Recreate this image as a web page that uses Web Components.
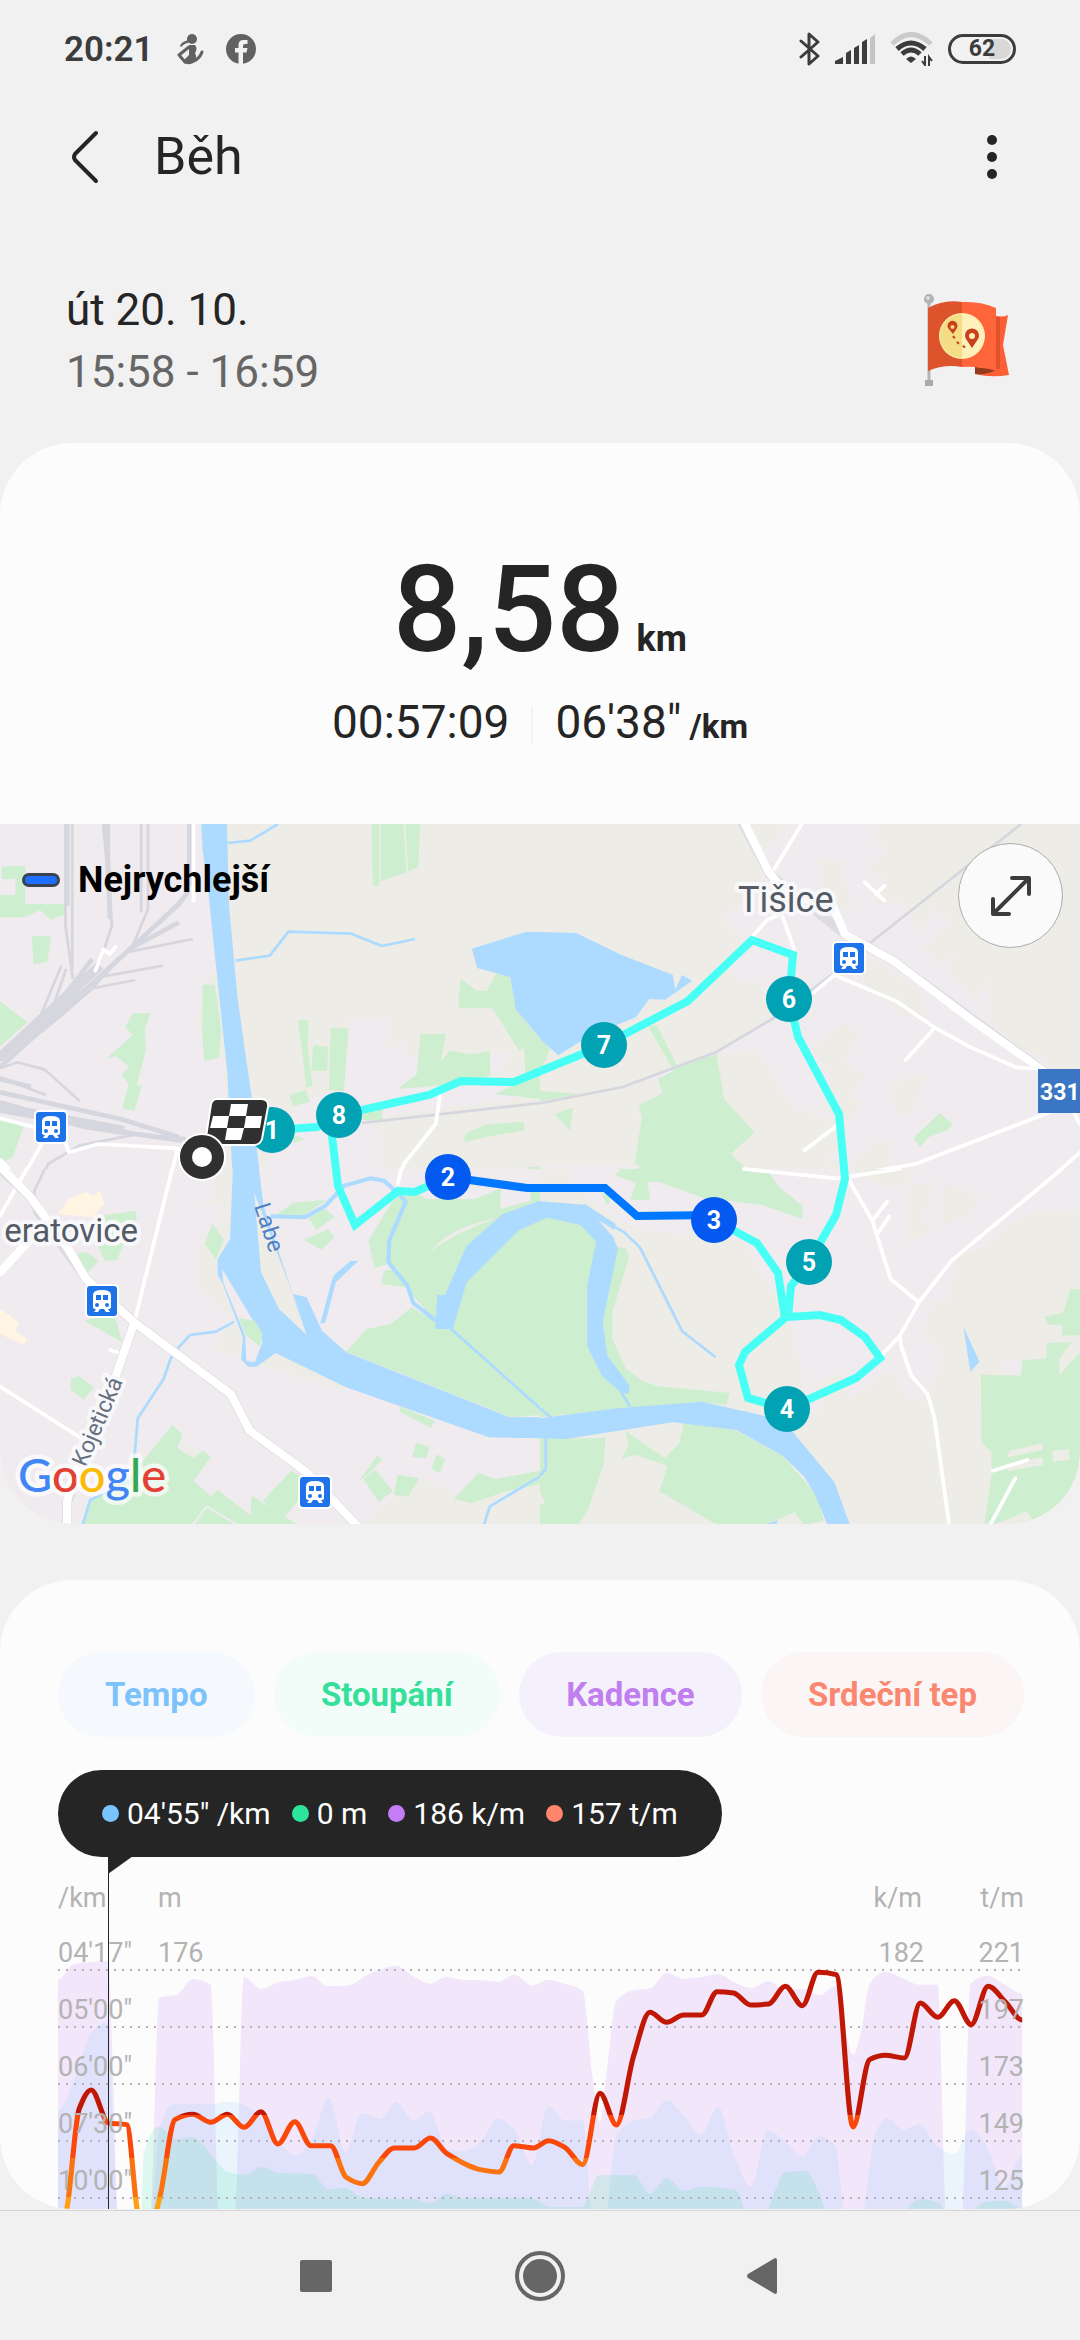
<!DOCTYPE html>
<html lang="cs">
<head>
<meta charset="utf-8">
<meta name="viewport" content="width=device-width, initial-scale=1">
<title>Běh</title>
<style>
  body {
    margin: 0;
    background: #f1f1f1;
    color: #252525;
    font-family: Roboto, "Liberation Sans", sans-serif;
  }
</style>
</head>
<body>
<run-page>
  <status-bar slot="top" time="20:21" battery="62"></status-bar>
  <app-header slot="top">Běh</app-header>
  <run-summary>
    <span slot="date">út 20. 10.</span>
    <span slot="time">15:58 - 16:59</span>
  </run-summary>
  <run-card>
    <run-stats distance="8,58" duration="00:57:09" pace="06'38&quot;"></run-stats>
    <route-map></route-map>
  </run-card>
  <run-card>
    <metric-chart>
      <metric-chip slot="chips" style="--tone:#7cc3fb;--tint:#f5f9fd">Tempo</metric-chip>
      <metric-chip slot="chips" style="--tone:#36e09a;--tint:#f2fcf9">Stoupání</metric-chip>
      <metric-chip slot="chips" style="--tone:#c07eee;--tint:#f5f1fc">Kadence</metric-chip>
      <metric-chip slot="chips" style="--tone:#fa8871;--tint:#fcf5f5">Srdeční tep</metric-chip>
      <metric-value slot="values" style="--tone:#77c4ff">04'55" /km</metric-value>
      <metric-value slot="values" style="--tone:#2fe59c">0 m</metric-value>
      <metric-value slot="values" style="--tone:#c47df4">186 k/m</metric-value>
      <metric-value slot="values" style="--tone:#ff866d">157 t/m</metric-value>
    </metric-chart>
  </run-card>
  <nav-bar slot="bottom"></nav-bar>
</run-page>

<script>
// Small base class: every element only supplies its markup
class BaseElement extends HTMLElement {
    connectedCallback() {
        if (this.shadowRoot) return;
        this.attachShadow({ mode: 'open' });
        this.shadowRoot.innerHTML = this.render();
    }
}

customElements.define('run-page', class extends BaseElement {
    render() {
        return `
      <style>
        :host { display: flex; flex-direction: column; min-height: 100vh; }
        main { flex: 1; display: flex; flex-direction: column; gap: 56px; }
        ::slotted(run-summary) { margin-bottom: -56px; }
      </style>
      <slot name="top"></slot>
      <main><slot></slot></main>
      <slot name="bottom"></slot>
    `;
    }
});

customElements.define('status-bar', class extends BaseElement {
    render() {
        return `
      <style>
        :host {
          display: flex; align-items: center; gap: 22px;
          height: 98px; padding: 0 64px; color: #3c3c3c;
        }
        time { font-size: 35px; font-weight: 600; }
        .space { flex: 1; }
        .right { display: flex; align-items: center; gap: 14px; }
        .battery {
          box-sizing: border-box; width: 68px; height: 30px; padding: 2px;
          border: 3px solid #3c3c3c; border-radius: 15px;
        }
        .level {
          height: 20px; border-radius: 10px; text-align: center;
          font-size: 23px; line-height: 20px; font-weight: 700;
          background: linear-gradient(90deg, transparent 62%, #d8d8d8 62%);
        }
      </style>
      <time>${this.getAttribute('time')}</time>
      <svg width="28" height="32" viewBox="0 0 28 32">
        <circle cx="16" cy="6" r="5" fill="#616161"/>
        <path d="M4 13Q5 9 12 7L12 10Q9 10 5 14Z" fill="#616161"/>
        <path d="M13 12H19Q22 15 19 20Q21 23 19 28Q16 32 11 31Q6 30 8 27L13 22Z" fill="#616161"/>
        <path d="M13 14L3 22L9 29M18 28Q24 25 26 19" fill="none" stroke="#616161" stroke-width="3" stroke-linecap="round" stroke-linejoin="round"/>
      </svg>
      <svg width="31" height="31" viewBox="0 0 31 31">
        <circle cx="15" cy="15" r="15" fill="#616161"/>
        <path d="M12.500 31V18.500H9V14H12.500V11Q12.500 6 17.500 6H21.500V10H19Q17 10 17 12V14H21.500L20.500 18.500H17V31Z" fill="#f1f1f1"/>
      </svg>
      <span class="space"></span>
      <div class="right">
        <svg width="22" height="36" viewBox="0 0 22 36" fill="none" stroke="#3c3c3c" stroke-width="3" stroke-linejoin="round" stroke-linecap="round">
          <path d="M2 10L19 25L10 33V3L19 11L2 26"/>
        </svg>
        <svg width="41" height="30" viewBox="0 0 41 30" fill="#3c3c3c">
          <path d="M0 30V27L8 23V30ZM11 30V19L16 16V30ZM19 30V14L24 11V30ZM27 30V8L32 5V30Z"/>
          <path d="M35 30V4L40 0V30Z" fill="#c4c4c4"/>
        </svg>
        <svg width="44" height="34" viewBox="0 0 44 34" fill="none" stroke-width="5">
          <path d="M2 12Q21 -7 41 12" stroke="#cbcbcb"/>
          <path d="M7 17Q21 5 35 17M12 22Q21 14 30 22" stroke="#3c3c3c"/>
          <path d="M21 31L16 27Q21 22 26 27Z" fill="#3c3c3c"/>
          <path d="M35 24V33L32 29M39 34V25L42 29" stroke="#3c3c3c" stroke-width="2"/>
        </svg>
        <div class="battery"><div class="level">${this.getAttribute('battery')}</div></div>
      </div>
    `;
    }
});

customElements.define('app-header', class extends BaseElement {
    render() {
        return `
      <style>
        :host { display: flex; align-items: center; height: 118px; padding: 0 66px 0 54px; }
        button { border: 0; padding: 0; background: none; color: inherit; display: flex; }
        h1 { flex: 1; margin: 0; font-size: 52px; line-height: 60px; font-weight: 400; }
        .back { padding: 0 15px; margin-right: 38px; }
      </style>
      <button class="back" aria-label="Zpět">
        <svg width="32" height="54" viewBox="0 0 32 54" fill="none" stroke="#252525" stroke-width="4" stroke-linecap="round" stroke-linejoin="round">
          <path d="M27 3L6 24Q4 27 6 30L27 51"/>
        </svg>
      </button>
      <h1><slot></slot></h1>
      <button aria-label="Další možnosti">
        <svg width="44" height="46" viewBox="0 0 44 46" fill="#252525">
          <circle cx="22" cy="6" r="5"/><circle cx="22" cy="23" r="5"/><circle cx="22" cy="40" r="5"/>
        </svg>
      </button>
    `;
    }
});

customElements.define('run-summary', class extends BaseElement {
    render() {
        return `
      <style>
        :host {
          display: flex; justify-content: space-between; align-items: center;
          padding: 63px 66px 40px; font-size: 44px; line-height: 62px;
        }
        .time { color: #666; }
      </style>
      <div>
        <div><slot name="date"></slot></div>
        <div class="time"><slot name="time"></slot></div>
      </div>
      <svg width="90" height="94" viewBox="0 0 90 94">
        <path d="M5 7V86" stroke="#b4b4b4" stroke-width="3"/>
        <rect x="1" y="86" width="8" height="6" fill="#aaa"/>
        <circle cx="5" cy="5" r="5" fill="#b2b2b2"/><circle cx="4" cy="4" r="2" fill="#ddd"/>
        <path d="M51 73V80Q67 84 85 81L79 51L84 21Q78 24 70 21V74Z" fill="#fc5f35"/>
        <path d="M51 73Q62 74 72 77V23L76 23V75Z" fill="#e0512a"/>
        <path d="M51 73V80Q64 81 72 76Z" fill="#963c1e"/>
        <path d="M4 14Q20 5 38 8V73Q20 70 4 77Z" fill="#dc532c"/>
        <path d="M38 8Q57 7 72 14V77Q57 72 38 73Z" fill="#ff643a"/>
        <circle cx="38" cy="42" r="23" fill="#fdf0b8"/>
        <path d="M38 20A22 22 0 0 0 38 64Z" fill="#f4dd85"/>
        <path d="M29 40L24 34A5 5 0 1 1 33 34ZM48 54L42 45A7 7 0 1 1 54 45Z" fill="#c9401c"/>
        <circle cx="28.500" cy="33" r="2" fill="#f4dd85"/><circle cx="48" cy="42" r="3" fill="#fdf0b8"/>
        <path d="M29 42L34 49L44 55" fill="none" stroke="#c9401c" stroke-width="2" stroke-dasharray="3 4"/>
      </svg>
    `;
    }
});

customElements.define('run-card', class extends BaseElement {
    render() {
        return `
      <style>
        :host { display: block; background: #fcfcfc; border-radius: 72px; overflow: hidden; }
      </style>
      <slot></slot>
    `;
    }
});

customElements.define('run-stats', class extends BaseElement {
    render() {
        return `
      <style>
        :host { display: flex; flex-direction: column; align-items: center; padding: 92px 0 60px; }
        .row { display: flex; align-items: baseline; }
        .distance { font-size: 120px; line-height: 150px; font-weight: 500; margin-right: 12px; }
        .unit { font-size: 36px; font-weight: 700; }
        .detail { font-size: 46px; line-height: 75px; }
        .detail .unit { font-size: 33px; margin-left: 8px; }
        .line { align-self: center; width: 2px; height: 36px; margin: 0 22px; background: #f3f3f3; }
      </style>
      <div class="row">
        <span class="distance">${this.getAttribute('distance')}</span>
        <span class="unit">km</span>
      </div>
      <div class="row detail">
        <span>${this.getAttribute('duration')}</span>
        <span class="line"></span>
        <span>${this.getAttribute('pace')}</span>
        <span class="unit">/km</span>
      </div>
    `;
    }
});

// Kilometre marks on the route: label, x, y, fastest section or not
const MARKS = [
    ['1', 272, 306], ['8', 339, 291], ['7', 604, 221], ['6', 789, 175],
    ['5', 809, 438], ['4', 787, 585], ['3', 714, 396, true], ['2', 448, 353, true]
];
const STATIONS = [[51, 303], [102, 477], [315, 668], [849, 134]];

customElements.define('route-map', class extends BaseElement {
    render() {
        const marks = MARKS.map(([n, x, y, fast]) => `
        <circle cx="${x}" cy="${y}" r="23" fill="${fast ? '#0459f0' : '#00a2b3'}"/>
        <text x="${x}" y="${y + 9}" class="mark">${n}</text>`).join('');
        const stations = STATIONS.map(([x, y]) => `
        <g transform="translate(${x} ${y})">
          <rect x="-17" y="-17" width="34" height="34" rx="5" fill="#fff"/>
          <rect x="-15" y="-15" width="30" height="30" rx="3" fill="#1f73e8"/>
          <path d="M-9 6V-6Q-9 -11 0 -11Q9 -11 9 -6V6Q9 8 6 8L8 11H4L2 8H-2L-4 11H-8L-6 8Q-9 8 -9 6Z" fill="#fff"/>
          <path d="M-6 -6H-1V-1H-6ZM1 -6H6V-1H1Z" fill="#1f73e8"/>
          <circle cx="-5" cy="4" r="2" fill="#1f73e8"/><circle cx="5" cy="4" r="2" fill="#1f73e8"/>
        </g>`).join('');
        return `
      <style>
        :host { display: block; position: relative; border-radius: 0 0 72px 72px; overflow: hidden; }
        .map { display: block; width: 100%; height: auto; font-family: Roboto, sans-serif; }
        .u { fill: #efebef; }
        .b { fill: #eeece6; }
        .g { fill: #ceeed0; }
        .w { fill: #addaff; }
        .y { fill: #fff5e2; }
        .stream, .rail, .road { fill: none; stroke-linejoin: round; }
        .stream { stroke: #addaff; stroke-width: 8; }
        .rail { stroke: #d6d6de; stroke-width: 8; }
        .yard { stroke-width: 14; }
        .road { stroke: #fff; stroke-width: 11; stroke-linecap: round; }
        .main { stroke-width: 24; }
        .edge { stroke: #dcdce2; stroke-width: 28; }
        .mark { fill: #fff; font-size: 25px; font-weight: 700; text-anchor: middle; }
        .place { fill: #545b66; font-size: 36px; stroke: #f8f8fa; stroke-width: 8px; paint-order: stroke; stroke-linejoin: round; }
        .town { font-size: 33px; }
        .street { font-size: 23px; fill: #667080; }
        .legend {
          position: absolute; left: 22px; top: 34px;
          display: flex; align-items: center; gap: 18px;
          color: #000; font-size: 36px; line-height: 44px; font-weight: 700;
        }
        .legend i { box-sizing: border-box; width: 38px; height: 14px; border: 3px solid #3c4250; border-radius: 7px; background: #1f6fff; }
        button {
          position: absolute; right: 17px; top: 19px; width: 105px; height: 105px; padding: 0;
          display: flex; align-items: center; justify-content: center;
          border: 1px solid #aaa; border-radius: 50%; background: #fafafa;
        }
      </style>
      <svg class="map" viewBox="0 0 1080 700">
        <rect width="1080" height="700" class="b"/>
        <!-- north west -->
        <g transform="matrix(.3444 0 0 .3333 0 -5)">
          <path class="u" d="M0 15H590L625 450L600 480L565 620L600 650L650 730L665 1090H0ZM1012 598H1130V690L1180 665L1185 710H1215L1210 765L1155 808L1568 790V830L1275 870L1060 900L1110 945V1090H775V1000L870 850L955 815H1000ZM1425 695H1480L1460 760H1425Z"/>
          <path class="g" d="M5 142H73V255H187V287L147 302L116 273L73 295H0V228H45V180H5ZM93 352H148L138 428L97 436ZM0 547L80 610L0 682ZM385 583H437L421 627L423 695L397 798L411 800L390 876L355 868L374 796L353 769L375 744L338 711L308 720L386 647L363 624ZM588 497H624L642 630L636 717L594 725L587 650ZM1078 15H1220L1215 143L1186 158L1102 188V200H1083ZM865 604H896L893 680L908 800L888 806L880 720ZM910 678L953 684L950 755H904ZM960 628H1012L998 816L955 814ZM841 828L887 812L900 850L850 860ZM1221 645H1295L1280 727L1305 695L1368 706L1422 696L1424 770L1270 800L1155 810L1210 766ZM1338 478L1383 515H1415L1440 463L1482 475L1497 570L1568 660V840L1435 825L1490 800L1525 770L1522 683L1508 697L1430 568L1330 567ZM1040 865L1110 855V905L1050 902ZM1350 945L1408 917L1520 908L1524 934L1420 952L1348 970ZM855 950L887 960L850 973ZM0 893L68 925L38 1012L0 1038ZM1528 1045L1568 1042V1090H1528Z"/>
          <path stroke="#eeece6" stroke-width="5" d="M1103 15V190M1174 15L1183 160"/>
          <path class="w" d="M584 15H659L665 260L690 540L730 830L756 1090H676L660 760L625 420L605 220L588 90ZM1370 389L1525 339H1568V658L1497 570L1482 475L1440 462L1385 447Z"/>
          <path class="stream" d="M660 72L727 65L807 15M684 425L783 410L838 338L1020 344L1109 381L1205 360"/>
          <path class="rail" d="M190 15V320L212 480M210 15V450M300 15L325 320L290 430M316 15V230M410 15V280M430 15V270L385 380M548 15V220L380 390L0 725M560 360L365 400L270 505M473 440L275 477M393 483L270 508L120 640M178 440L120 585M192 450L150 575M0 748L50 730L130 752L232 847M0 775L133 828M150 880L380 940L540 962M120 1080L140 1035L230 980L400 945L540 958M1050 912L1568 852"/>
          <path class="rail yard" d="M195 15V260M308 15L320 300M550 15V200M545 220L520 255L240 520L0 745M520 310L385 385M268 420L180 540M0 780L90 803M0 820L350 900L520 955M0 850L250 925L530 965M0 875L300 930"/>
          <path class="rail" style="stroke-width:28" d="M0 715L125 595L290 440M0 865L360 935"/>
          <path class="road" d="M562 15V245M277 455L301 391L318 405L336 383M0 898L100 925M120 978L60 1085M190 970L200 1000L285 975L515 988L495 1080M1278 830L1265 915L1173 1035L1162 1085"/>
          <path class="road main" d="M0 1030L50 1090"/>
        </g>
        <!-- north east -->
        <g transform="matrix(.3444 0 0 .3333 540 -5)">
          <path class="u" d="M720 15H990L970 70L1018 92L955 145L1000 180L970 255L1050 250L1100 350L1140 265L1190 305L1110 395L1165 430L1205 405L1190 470L1265 540L1305 480V615L1400 690L1470 720L1568 850V1090H1000L1030 960L965 970L900 1040L810 1020L860 950L690 960L750 880L710 830L630 690L510 710L535 840L625 940L555 1005L600 1050L670 1090H0V1040L290 1040L285 860L0 850L240 800L510 700L700 590L630 490L580 485L540 440L620 390L530 300L640 200V100Z"/>
          <path class="b" d="M0 850L240 800L345 780L355 823L287 858L290 1040H0Z"/>
          <path class="b" d="M800 110L820 180L780 250L900 270L880 130ZM880 430L950 410L1100 510L1130 600L1050 590ZM790 690L880 610L925 660L880 720L945 770L900 830L940 850L895 900L810 870L850 780ZM1010 800L1120 760L1080 880L1040 890ZM690 940L760 870L860 910L880 990L800 1040L740 1010Z"/>
          <path class="g" d="M0 658L30 690L0 760ZM313 620L340 620L400 745L512 705L535 840L623 940L555 1005L600 1050L670 1090H285L217 1065L232 1045L270 1070L290 1040L275 1035L295 900L287 858L357 823L342 780L388 755ZM0 815L118 825L0 847ZM42 886L97 865L86 934ZM1160 882L1198 915L1185 932L1127 955L1104 984L1084 958Z"/>
          <path class="w" d="M0 339L105 342L235 407L385 467L393 512L412 468L442 485L363 542L318 540L278 595L145 650L53 709L0 660Z"/>
          <path class="rail" d="M0 853L240 804L510 700L690 590L850 465M955 375L1230 150L1397 15"/>
          <path class="road edge" d="M590 15L670 170L885 345L1025 425L1460 755"/>
          <path class="road" d="M760 15L680 150M943 190L1000 245M1000 200L975 225M610 360L660 302L690 290M705 295L738 390M795 520L855 468L1035 547L1145 625L1245 682L1383 745L1450 750M1145 628L1062 723M768 994L868 915M592 1050L860 1075L1090 1035L1480 880M1568 1000L1470 1090M1550 880L1568 915"/>
          <path class="road main" d="M595 15L665 160L720 230L850 260L885 345L1025 425L1250 600L1460 755"/>
        </g>
        <!-- south west -->
        <g transform="matrix(.3444 0 0 .3333 0 345)">
          <path class="u" d="M0 0H1568V1068H0Z"/>
          <path class="b" d="M670 0H630L615 90L580 105L640 110V170L600 190L570 260L568 350L630 400L680 458L650 490L615 530L660 560L710 540L760 590L1005 665V550L850 375L760 110ZM1040 215L1090 200L1070 270L1045 275ZM515 800L590 860L550 880ZM1060 1068L1100 1020L1230 930L1330 980L1568 940V1068Z"/>
          <path class="u" d="M765 110L850 375L930 480L1005 550L1110 465V250L1000 60H770Z"/>
          <path class="y" d="M168 135L200 90L250 68L270 82L290 65L303 105L270 145ZM0 420L55 460L45 485L77 510L70 528L0 495Z"/>
          <path class="g" d="M290 140L395 125V180L355 235L340 272L305 275L285 235ZM225 255L250 248L287 275L250 315ZM617 165L650 212L627 270L594 225ZM245 455L330 430L355 520ZM206 628L230 622L273 655L242 692L206 662ZM795 143L850 102L950 92L880 140ZM897 147L940 118L972 143L918 184ZM883 213L952 180L972 205L934 242ZM1070 215L1140 95L1160 60H1568V738L1485 745L1005 548L1065 480L1135 465L1195 415L1260 455L1180 355L1108 345L1115 305L1160 300L1127 285L1088 297ZM240 1068L262 993L380 920L500 768L530 795L515 837L560 867L590 845L612 865L562 935L612 982L632 963L728 1040L730 980L865 1068ZM763 995L845 905L890 930L870 990L822 1050ZM1160 712L1262 755L1253 777L1160 728ZM1208 822L1248 833L1238 868L1197 863ZM1268 856L1293 870L1276 913L1253 898ZM1040 938L1095 860L1110 870L1080 905ZM1055 930L1090 902L1140 965L1100 1000ZM1155 917L1217 928L1185 983L1143 978ZM1318 990L1388 912L1440 930L1568 905V945L1460 970L1370 1003Z"/>
          <path class="u" d="M1160 60L1200 70L1240 90L1380 90L1450 60L1568 50V0H1200ZM1455 40H1540V95L1453 120Z"/>
          <path class="b" d="M1245 253Q1300 175 1450 145Q1320 190 1245 253Z"/>
          <path fill="none" stroke="#efebef" stroke-width="6" d="M560 1068L600 1013L690 1068"/>
          <path class="w" d="M676 0H752L765 110L850 375L890 385L935 485L1005 550L1480 745H1568V808L1420 805L1005 655L800 552L745 593H720L700 570L705 505L645 340L632 320V270L668 210ZM1263 480L1270 378H1292L1355 230L1460 135L1568 95V155L1505 185L1355 340L1315 480Z"/>
          <path class="b" d="M738 70L850 375L890 497L810 420L758 310Z"/>
          <path class="u" d="M645 300L758 495L762 520L740 580L715 575L712 500L648 340Z"/>
          <path class="g" d="M693 447L740 455L762 495L755 532L715 500Z"/>
          <path class="w" d="M930 465L962 340L970 318L1018 276H1040L975 340L945 460Z"/>
          <path class="stream" style="stroke-width:12" d="M785 142L885 145L945 110L1000 50L1075 28L1115 35L1155 72L1178 98L1130 215L1128 280L1183 350L1200 402L1265 455"/>
          <path class="stream" d="M1310 480L1568 718M680 458L627 488L552 498L515 540L495 570L475 630L400 748L390 870L385 930L262 993L240 1068M1568 922L1422 1013L1405 1068"/>
          <path class="rail" d="M130 0L100 65V130L190 260L240 325"/>
          <path class="road" d="M78 0L0 140M500 0L390 460M0 653L240 810M320 543L340 550M1165 0L1155 45"/>
          <path class="road edge" d="M0 0L85 80L250 330L390 460L670 675L725 785L890 910L1035 1068M390 460L320 670L195 1000V1068"/>
          <path class="road main" d="M0 -8L85 80L195 235L250 330L390 460L670 675L725 785L890 910L1035 1068M0 310L85 215M390 460L320 670L205 950L195 1000V1068"/>
        </g>
        <!-- south east -->
        <g transform="matrix(.3444 0 0 .3333 540 345)">
          <path class="b" d="M0 0H1568V1068H0Z"/>
          <path class="u" d="M90 0H900L990 50H1070L1090 0H1568V135L1460 120L1360 170L1290 235L1210 260L1190 390L1140 400L1110 500L1170 550L1155 610L1115 690H1060L1020 600L900 690L870 610L800 640L830 710L780 740L740 500L720 450L590 210L300 185L220 150L92 45ZM1335 570L1400 575L1390 620L1340 610Z"/>
          <path class="b" d="M1070 50L1150 40L1110 150L1140 180L1060 230ZM1170 40L1270 80L1260 130L1170 170Z"/>
          <path class="g" d="M0 140L130 145L190 230L250 238L257 268L210 430V510L250 600L300 638L345 652L552 672L540 708L470 700L230 720L0 745ZM235 0H660L690 50L762 110V150L645 108L580 100L470 85L340 37L312 40L320 93H263L278 42L217 18ZM175 70L205 85L197 110ZM0 808H165L190 803L185 885L140 1020L110 1068H0V1010L15 1000L0 970ZM248 785L362 867L405 823L417 760L570 785L705 860L800 975L825 1055L765 1068L740 1030L650 1068H515L347 967L370 890L275 857L235 870L257 830ZM1540 360H1568V498L1516 500V467L1475 468L1465 443L1520 430ZM1472 522L1543 520L1508 570V618L1568 550V1068H1290L1312 905L1310 850L1282 820L1280 617L1397 620L1400 575L1470 568Z"/>
          <path class="b" d="M1362 845L1460 823V842L1358 865ZM1357 885L1460 865V888L1357 907ZM1487 847L1535 840L1538 872L1490 878ZM1375 1045L1412 1025L1440 1068H1310Z"/>
          <path class="b" d="M225 240L245 232L175 430V530L230 640L345 652L300 638L250 600L210 510V430L257 268Z" opacity="0"/>
          <path class="w" d="M0 97L130 107L213 205L226 240L182 460L196 560L260 650L257 675L232 668L180 620L137 530V350L163 218L118 168L22 146L0 155ZM110 115L130 105L220 165L215 182ZM0 748L225 718L470 698L650 740L735 790L855 940L900 1068H835L795 970L765 920L705 860L570 783L385 760L75 810L0 808ZM1230 475L1276 578L1249 609ZM650 1068L690 1053L685 1068Z"/>
          <path class="stream" d="M210 170L245 190L290 235L413 487L510 565M235 670L262 713M0 718L33 747M17 808V900L0 920"/>
          <path class="road" d="M592 0L860 28L1045 0M895 30L965 155L1018 330L1100 400M965 155L1008 98M980 195L1013 143M1515 0L1195 275L1100 400L1045 500L990 560M1045 500L1048 530L1078 620L1125 675L1145 745L1188 1068M1315 905L1415 873M1380 928L1308 1066"/>
        </g>
        <text class="place" x="738" y="88">Tišice</text>
        <text class="place town" x="138" y="418" text-anchor="end">eratovice</text>
        <text class="place street" transform="translate(86 644) rotate(-67)">Kojetická</text>
        <text transform="translate(254 382) rotate(72)" font-size="23" fill="#4f7fc4">Labe</text>
        ${stations}
        <rect x="1038" y="245" width="42" height="44" fill="#3b76c5"/>
        <text x="1040" y="276" font-size="23" font-weight="700" fill="#fff">331</text>
        <g fill="none" stroke="#48fff6" stroke-width="8">
          <path d="M272 306L317 303L339 291L429 271L461 257L514 258L604 221L688 177L752 116L793 131L789 175L798 213L839 290L845 355L836 391L809 438L791 462L788 493L820 491L841 496L865 513L880 534L856 554L787 585L748 574L739 541L745 528L785 494L778 449L757 419L714 396"/>
          <path d="M339 291L332 312L338 362L355 401L398 367L415 368L448 353"/>
          <path d="M448 353L527 364L605 364L637 392L714 391" stroke="#0077ff"/>
        </g>
        ${marks}
        <path d="M216 275H262Q269 276 268 283L262 315Q260 321 254 321H212Q205 320 206 313L211 280Q212 276 216 275Z" fill="#303030" stroke="#fff" stroke-width="2"/>
        <path d="M231 280H248L246 292H229ZM213 292H229L227 304H210ZM246 292H262L260 304H244ZM227 304H244L241 316H225Z" fill="#fff"/>
        <circle cx="202" cy="333" r="23" fill="#303030" stroke="#fff" stroke-width="2"/>
        <circle cx="202" cy="333" r="10" fill="#fff"/>
        <text x="18" y="668" style="font: 500 47px Lato, sans-serif; stroke: #ffffffb0; stroke-width: 9px; paint-order: stroke; stroke-linejoin: round"><tspan fill="#4285f4">G</tspan><tspan fill="#e34133">o</tspan><tspan fill="#fabb05">o</tspan><tspan fill="#4285f4">g</tspan><tspan fill="#34a853">l</tspan><tspan fill="#e34133">e</tspan></text>
      </svg>
      <div class="legend"><i></i>Nejrychlejší</div>
      <button aria-label="Zvětšit mapu">
        <svg width="42" height="42" viewBox="0 0 42 42" fill="none" stroke="#3c3c3c" stroke-width="4" stroke-linecap="round" stroke-linejoin="round">
          <path d="M4 38L38 4M22 3H39V19M3 24V39H19"/>
        </svg>
      </button>
    `;
    }
});

customElements.define('metric-chip', class extends BaseElement {
    render() {
        return `
      <style>
        :host { display: block; }
        button {
          height: 85px; padding: 0 47px; border: 0; border-radius: 43px;
          background: var(--tint); color: var(--tone);
          font: 700 33px/40px Roboto, sans-serif; white-space: nowrap;
        }
      </style>
      <button><slot></slot></button>
    `;
    }
});

customElements.define('metric-value', class extends BaseElement {
    render() {
        return `
      <style>
        :host { display: flex; align-items: center; gap: 8px; }
        i { width: 17px; height: 17px; border-radius: 50%; background: var(--tone); }
      </style>
      <i></i><span><slot></slot></span>
    `;
    }
});

// Series as runs of [x, y]; a run ends where the value drops below the chart
const CADENCE = [
    [[168, 362], [215, 315], [315, 307], [328, 640], [343, 1070]],
    [[437, 1070], [462, 415], [512, 408], [560, 360], [612, 378], [636, 1070]],
    [[681, 1070], [708, 354], [760, 390], [810, 370], [857, 362], [905, 351], [950, 381], [1010, 380], [1060, 352],
        [1105, 331], [1152, 321], [1200, 352], [1248, 374], [1296, 354], [1345, 363], [1400, 364], [1449, 368],
        [1494, 347], [1545, 379], [1592, 363], [1640, 374], [1692, 395], [1720, 650], [1742, 790], [1760, 650],
        [1790, 425], [1840, 394], [1888, 388], [1936, 341], [1985, 360], [2035, 355], [2085, 345], [2135, 371],
        [2183, 387], [2230, 366], [2280, 395], [2330, 390], [2380, 408], [2428, 380], [2455, 520], [2477, 588],
        [2500, 520], [2525, 375], [2570, 338], [2620, 357], [2670, 377], [2723, 377], [2748, 1070]],
    [[2793, 1070], [2818, 375], [2868, 350], [2915, 376], [2968, 403]]
];
const PACE = [
    [[168, 755], [220, 650], [265, 520], [315, 488], [328, 800], [343, 1070]],
    [[437, 1070], [465, 800], [500, 736], [612, 736], [660, 728], [709, 738], [760, 780], [810, 850], [858, 890],
        [905, 840], [955, 717], [1004, 880], [1050, 762], [1103, 780], [1152, 728], [1200, 785], [1248, 757],
        [1296, 870], [1350, 876], [1395, 850], [1445, 777], [1492, 810], [1545, 918], [1592, 742], [1640, 785],
        [1692, 784], [1720, 1070]],
    [[1757, 1070], [1790, 830], [1840, 785], [1888, 778], [1936, 723], [1985, 770], [2035, 826], [2085, 744],
        [2132, 890], [2180, 983], [2230, 814], [2280, 848], [2328, 893], [2378, 832], [2425, 860], [2455, 1070]],
    [[2500, 1070], [2540, 830], [2575, 778], [2623, 812], [2670, 795], [2720, 860], [2770, 884], [2820, 810],
        [2868, 870], [2915, 985], [2968, 890]]
];
const CLIMB = [
    [[408, 1070], [418, 880], [460, 803], [512, 841], [560, 834], [612, 885], [660, 938], [709, 947], [760, 924],
        [810, 942], [905, 945], [955, 991], [1004, 987], [1052, 1016], [1203, 1020], [1250, 1032], [1298, 1004],
        [1350, 1018], [1545, 1018], [1600, 1045], [1692, 1043], [1740, 948], [1840, 948], [1888, 1005], [1936, 958],
        [1985, 995], [2035, 983], [2135, 992], [2175, 1070]],
    [[2215, 1070], [2280, 940], [2340, 935], [2378, 1000], [2405, 1070]],
    [[2605, 1070], [2670, 1021], [2723, 1030], [2760, 1070]],
    [[2790, 1070], [2868, 1028], [2920, 1025], [2968, 1048]]
];
const HEART = [
    [[187, 1070], [230, 750], [265, 693], [315, 792], [368, 797], [404, 1070]],
    [[450, 1060], [465, 1010], [508, 782], [560, 766], [612, 790], [660, 766], [709, 805], [758, 758], [807, 855],
        [856, 788], [903, 860], [960, 860], [1005, 955], [1052, 974], [1100, 910], [1145, 867], [1203, 867],
        [1250, 837], [1298, 884], [1395, 932], [1449, 939], [1492, 860], [1549, 867], [1593, 845], [1640, 865],
        [1692, 917], [1742, 703], [1790, 798], [1840, 590], [1887, 460], [1936, 490], [1985, 468], [2038, 468],
        [2082, 398], [2130, 402], [2180, 438], [2232, 435], [2280, 382], [2330, 440], [2375, 340], [2428, 347],
        [2477, 804], [2525, 602], [2570, 589], [2626, 597], [2672, 432], [2723, 475], [2771, 425], [2820, 497],
        [2869, 382], [2920, 430], [2968, 483]]
];

// Monotone cubic through the points, so peaks never overshoot
function curve(points) {
    const slope = points.map((p, i) => {
        const a = points[i - 1], b = points[i + 1];
        if (!a || !b) return 0;
        const s0 = (p[1] - a[1]) / (p[0] - a[0]);
        const s1 = (b[1] - p[1]) / (b[0] - p[0]);
        return s0 * s1 <= 0 ? 0 : 2 * s0 * s1 / (s0 + s1);
    });
    let d = `M${points[0]}`;
    for (let i = 1; i < points.length; i++) {
        const [x0, y0] = points[i - 1], [x1, y1] = points[i];
        const t = (x1 - x0) / 3;
        d += `C${x0 + t} ${y0 + slope[i - 1] * t} ${x1 - t} ${y1 - slope[i] * t} ${x1} ${y1}`;
    }
    return d;
}

const line = runs => runs.map(curve).join('');
const area = runs => runs.map(r => `${curve(r)}V1070H${r[0][0]}Z`).join('');

customElements.define('metric-chart', class extends BaseElement {
    render() {
        const pace = ["04'17\"", "05'00\"", "06'00\"", "07'30\"", "10'00\""];
        const heart = [221, 197, 173, 149, 125];
        const grid = pace.map((_, i) => `<path d="M0 ${111 + i * 57}H966"/>`).join('');
        const labels = pace.map((p, i) => `
          <text x="0" y="${103 + i * 57}">${p}</text>
          <text x="966" y="${103 + i * 57}" text-anchor="end">${heart[i]}</text>`).join('');
        return `
      <style>
        :host { display: block; padding: 72px 56px 0 58px; }
        .chips { display: flex; justify-content: space-between; margin-bottom: 33px; }
        .values {
          display: flex; align-items: center; gap: 21px; width: fit-content; height: 87px;
          padding: 0 44px; border-radius: 44px; background: #252525; color: #fff; font-size: 30px;
          white-space: nowrap; box-sizing: border-box;
        }
        svg { display: block; width: 100%; height: auto; font: 27px Roboto, sans-serif; }
      </style>
      <div class="chips"><slot name="chips"></slot></div>
      <div class="values"><slot name="values"></slot></div>
      <svg viewBox="0 -2 966 352">
        <defs>
          <linearGradient id="zones" gradientUnits="userSpaceOnUse" x1="0" y1="0" x2="0" y2="1200">
            <stop offset=".64" stop-color="#c11806"/><stop offset=".64" stop-color="#f9480a"/>
            <stop offset=".748" stop-color="#f9480a"/><stop offset=".748" stop-color="#fb7210"/>
            <stop offset=".846" stop-color="#fb7210"/><stop offset=".846" stop-color="#fca012"/>
          </linearGradient>
        </defs>
        <g transform="matrix(.3444 0 0 .3333 -58 0)">
          <path d="${area(CADENCE)}" fill="#c47df2" opacity=".17"/>
          <path d="${area(PACE)}" fill="#77c4ff" opacity=".14"/>
          <path d="${area(CLIMB)}" fill="#2de2a0" opacity=".15"/>
        </g>
        <g stroke="#b5b0b8" stroke-width="2" stroke-dasharray="2 6">${grid}</g>
        <path d="${line(HEART)}" transform="matrix(.3444 0 0 .3333 -58 0)" fill="none" stroke="url(#zones)" stroke-width="15" stroke-linejoin="round"/>
        <g fill="#b3b3b3">
          <text x="0" y="48">/km</text><text x="100" y="48">m</text>
          <text x="864" y="48" text-anchor="end">k/m</text><text x="966" y="48" text-anchor="end">t/m</text>
          <text x="100" y="103">176</text><text x="866" y="103" text-anchor="end">182</text>
          ${labels}
        </g>
        <rect x="50" y="-2" width="1" height="352" fill="#252525"/>
        <path d="M50 -3H75L50 15Z" fill="#252525"/>
      </svg>
    `;
    }
});

customElements.define('nav-bar', class extends BaseElement {
    render() {
        return `
      <style>
        :host {
          box-sizing: border-box; display: flex; justify-content: center; align-items: center; gap: 174px;
          height: 130px; border-top: 1px solid #d5d5d5; background: #f1f1f1;
        }
        button { width: 50px; height: 50px; padding: 0; border: 0; background: none; }
        svg { display: block; fill: #666; }
      </style>
      <button aria-label="Poslední aplikace"><svg width="50" height="50"><rect x="9" y="9" width="32" height="32" rx="2"/></svg></button>
      <button aria-label="Domů">
        <svg width="50" height="50"><circle cx="25" cy="25" r="17"/><circle cx="25" cy="25" r="23" fill="none" stroke="#666" stroke-width="4"/></svg>
      </button>
      <button aria-label="Zpět">
        <svg width="50" height="50"><path d="M9 23L36 7Q38 7 38 9V41Q38 43 36 43L9 27Q7 25 9 23Z"/></svg>
      </button>
    `;
    }
});
</script>
</body>
</html>
